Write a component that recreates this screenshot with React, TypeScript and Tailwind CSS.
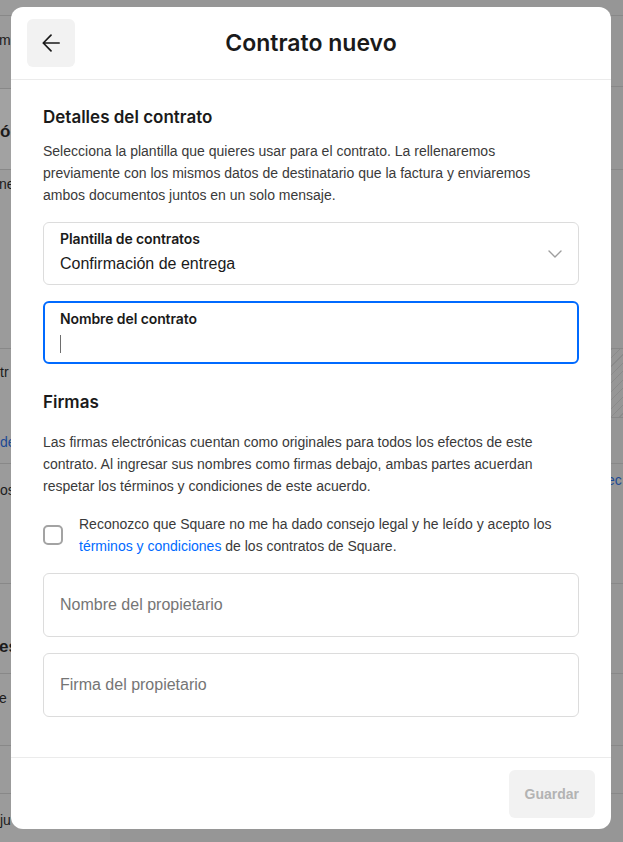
import React from "react";

function Background() {
  return (
    <div className="flex h-full w-full">
      <div className="flex w-[110px] shrink-0 flex-col bg-[#9b9b9b] text-[14px] text-[#1c1c1c]">
        <div className="h-[16px] border-b border-[#888888]" />
        <div className="h-[73px] border-b border-[#888888] pt-[14px] leading-5 ml-[-1px]">m</div>
        <div className="h-[81px] border-b border-[#888888] bg-[#a2a2a2] pt-[31px] text-[17px] font-bold leading-6">ó</div>
        <div className="h-[179px] border-b border-[#888888] pt-[4px] leading-5 ml-[-1px]">ne</div>
        <div className="flex h-[115px] flex-col border-b border-[#888888] pt-[13px] leading-5">
          <span>tr</span>
          <span className="mt-[50px] text-[#1d4a94]">de</span>
        </div>
        <div className="h-[120px] border-b border-[#888888] pt-[16px] leading-5">os</div>
        <div className="h-[90px] border-b border-[#888888] pt-[51px] text-[17px] font-bold leading-6 ml-[-1px]">es</div>
        <div className="h-[72px] border-b border-[#888888] pt-[14px] leading-5 ml-[-1px]">e e</div>
        <div className="h-[48px] border-b border-[#888888]" />
        <div className="flex-1 pt-[16px] leading-5">ju</div>
      </div>
      <div className="flex flex-1 flex-col bg-[#969696] text-[14px]">
        <div className="h-[16px] border-b border-[#888888]" />
        <div className="h-[71px] border-b border-[#888888]" />
        <div className="h-[83px] border-b border-[#888888]" />
        <div className="h-[179px] border-b border-[#888888]" />
        <div className="h-[69px] border-b border-[#888888] bg-[repeating-linear-gradient(135deg,#8a8a8a_0px,#8a8a8a_1px,transparent_1px,transparent_6px)]" />
        <div className="h-[46px] border-b border-[#888888]" />
        <div className="h-[120px] border-b border-[#888888] pt-[6px] leading-5">
          <span className="ml-[497px] text-[#1d4a94]">ec</span>
        </div>
        <div className="h-[90px] border-b border-[#888888]" />
        <div className="h-[72px] border-b border-[#888888]" />
        <div className="h-[48px] border-b border-[#888888]" />
        <div className="flex-1" />
      </div>
    </div>
  );
}

export default function App() {
  return (
    <div className="relative h-[842px] w-[623px] overflow-hidden bg-[#969696] font-['Liberation_Sans',Arial,sans-serif]">
      <Background />
      <div className="absolute left-[11px] top-[7px] flex h-[822px] w-[600px] flex-col overflow-hidden rounded-[12px] bg-white">
        <header className="grid h-[73px] shrink-0 grid-cols-[48px_1fr_48px] items-center border-b border-[#ebebeb] px-4">
          <button className="flex h-12 w-12 items-center justify-center rounded-[6px] bg-[#f2f2f2]">
            <svg width="18" height="18" viewBox="0 0 18 18" fill="none">
              <path d="M9 1.2 L1.3 9 L9 16.8 M1.3 9 H17.2" stroke="#1a1a1a" strokeWidth="1.7" strokeLinecap="round" strokeLinejoin="round" />
            </svg>
          </button>
          <h1 className="text-center font-['Inter',sans-serif] text-[23px] font-semibold leading-7 text-[#1a1a1a]">
            Contrato nuevo
          </h1>
          <div />
        </header>

        <main className="flex-1 px-8 pt-6">
          <h2 className="mt-[1px] font-['Inter',sans-serif] text-[17px] font-semibold leading-6 text-[#1a1a1a]">
            Detalles del contrato
          </h2>
          <p className="mt-[11px] text-[14px] leading-[22px] text-[#3a3a3a]">
            Selecciona la plantilla que quieres usar para el contrato. La rellenaremos
            <br />
            previamente con los mismos datos de destinatario que la factura y enviaremos
            <br />
            ambos documentos juntos en un solo mensaje.
          </p>

          <div className="mt-4 flex h-[63px] rounded-[6px] border border-[#dcdcdc] px-4">
            <div className="flex flex-1 flex-col pt-2">
              <span className="font-['Inter',sans-serif] text-[14px] font-semibold leading-4 tracking-[-0.1px] text-[#1a1a1a]">
                Plantilla de contratos
              </span>
              <span className="mt-[5px] text-[16px] leading-6 text-[#1a1a1a]">Confirmación de entrega</span>
            </div>
            <div className="flex items-center">
              <svg width="14" height="8" viewBox="0 0 14 8" fill="none">
                <path d="M1 1 L7 7 L13 1" stroke="#9e9e9e" strokeWidth="1.4" strokeLinecap="round" strokeLinejoin="round" />
              </svg>
            </div>
          </div>

          <div className="mt-4 flex h-[63px] flex-col rounded-[6px] border-2 border-[#006aff] px-[15px] pt-2">
            <span className="font-['Inter',sans-serif] text-[14px] font-semibold leading-4 tracking-[-0.1px] text-[#1a1a1a]">
              Nombre del contrato
            </span>
            <div className="mt-[5px] flex h-6 items-center">
              <span className="h-[18px] w-px bg-[#6e6e6e]" />
            </div>
          </div>

          <h2 className="mt-[26px] font-['Inter',sans-serif] text-[17px] font-semibold leading-6 text-[#1a1a1a]">
            Firmas
          </h2>
          <p className="mt-[17px] text-[14px] leading-[22px] text-[#3a3a3a]">
            Las firmas electrónicas cuentan como originales para todos los efectos de este contrato. Al ingresar sus nombres como firmas debajo, ambas partes acuerdan respetar los términos y condiciones de este acuerdo.
          </p>

          <div className="mt-4 flex items-center gap-4">
            <span className="h-5 w-5 shrink-0 rounded-[5px] border-2 border-[#a3a3a3]" />
            <p className="text-[14px] leading-[22px] text-[#3a3a3a]">
              Reconozco que Square no me ha dado consejo legal y he leído y acepto los{" "}
              <span className="text-[#006aff]">términos y condiciones</span> de los contratos de Square.
            </p>
          </div>

          <div className="mt-4 flex h-16 items-center rounded-[6px] border border-[#dcdcdc] px-4 text-[16px] text-[#757575]">
            Nombre del propietario
          </div>
          <div className="mt-4 flex h-16 items-center rounded-[6px] border border-[#dcdcdc] px-4 text-[16px] text-[#757575]">
            Firma del propietario
          </div>
        </main>

        <footer className="flex h-[72px] shrink-0 justify-end border-t border-[#ebebeb] px-4 pt-3">
          <button className="h-12 rounded-[6px] bg-[#f2f2f2] px-4 text-[14px] font-bold text-[#b3b3b3]">
            Guardar
          </button>
        </footer>
      </div>
    </div>
  );
}
